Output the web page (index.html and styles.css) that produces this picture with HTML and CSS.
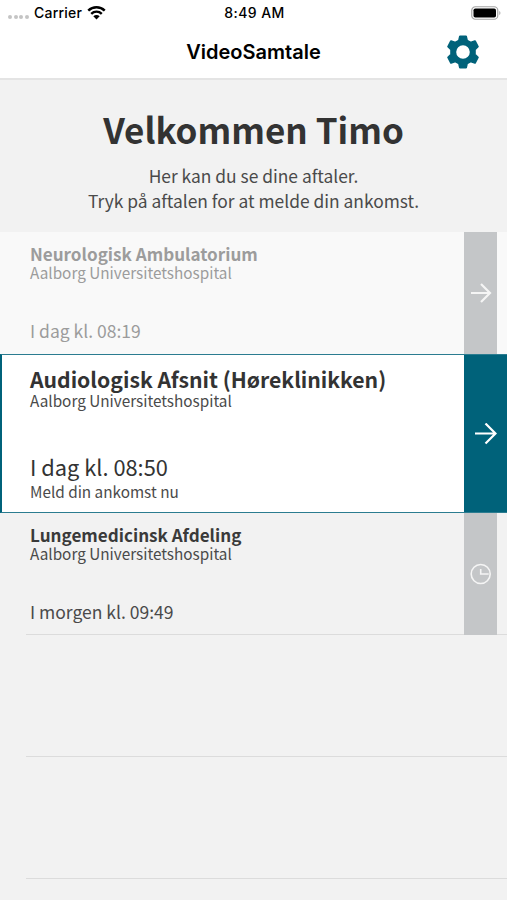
FILE: index.html
```html
<!DOCTYPE html>
<html lang="da">
<head>
    <meta charset="UTF-8">
    <meta name="viewport" content="width=device-width, initial-scale=1.0">
    <title>VideoSamtale</title>
    <link rel="stylesheet" href="styles.css">
</head>
<body>
    <header>
        <div class="status-bar">
            <div class="carrier">
                <span class="signal"><i></i><i></i><i></i><i></i></span>
                <span>Carrier</span>
                <svg class="wifi" viewBox="0 0 18 14">
                    <path d="M1.2 5.2a11.2 11.2 0 0 1 15.6 0M4 8.2a7.2 7.2 0 0 1 10 0" fill="none" stroke="#000" stroke-width="2.3"/>
                    <path d="M9 13.6l-3-3a4.3 4.3 0 0 1 6 0z"/>
                </svg>
            </div>
            <span class="clock">8:49 AM</span>
            <svg class="battery" viewBox="0 0 30 14">
                <rect x="0.75" y="0.75" width="26" height="12.5" rx="3.6" fill="none" stroke="#a5a5a5" stroke-width="1.2"/>
                <rect x="2.5" y="2.5" width="22.5" height="9" rx="1.8"/>
                <path d="M28.3 5v4c1.5-.6 1.5-3.4 0-4z" fill="#a5a5a5"/>
            </svg>
        </div>
        <div class="nav-bar">
            <h2>VideoSamtale</h2>
            <svg class="settings" viewBox="-16 -17 32 34">
                <path fill="#00627a" fill-rule="evenodd" stroke="#00627a" stroke-width="2" stroke-linejoin="round" d="M-3-15.5H3L4-11.3 7.6-9.3 12-10.7 14.8-5.4 11.8-2.6V2.6L14.8 5.4 12 10.7 7.6 9.3 4 11.3 3 15.5H-3L-4 11.3-7.6 9.3-12 10.7-14.8 5.4-11.8 2.6V-2.6L-14.8-5.4-12-10.7-7.6-9.3-4-11.3ZM7.8 0A7.8 7.8 0 1 0-7.8 0A7.8 7.8 0 1 0 7.8 0Z"/>
            </svg>
        </div>
    </header>

    <section class="welcome">
        <h1>Velkommen Timo</h1>
        <p>Her kan du se dine aftaler.<br>Tryk på aftalen for at melde din ankomst.</p>
    </section>

    <main class="appointments">
        <div class="appointment past">
            <div class="info">
                <h3>Neurologisk Ambulatorium</h3>
                <p class="place">Aalborg Universitetshospital</p>
                <p class="time">I dag kl. 08:19</p>
            </div>
            <div class="action">
                <svg viewBox="0 0 22 22"><path d="M1 11h19M11 2l9 9-9 9"/></svg>
            </div>
        </div>
        <div class="appointment active">
            <div class="info">
                <h3>Audiologisk Afsnit (Høreklinikken)</h3>
                <p class="place">Aalborg Universitetshospital</p>
                <p class="time">I dag kl. 08:50</p>
                <p class="hint">Meld din ankomst nu</p>
            </div>
            <div class="action">
                <svg viewBox="0 0 22 22"><path d="M0 10.5h20.5M10.5 .5l10 10-10 10"/></svg>
            </div>
        </div>
        <div class="appointment upcoming">
            <div class="info">
                <h3>Lungemedicinsk Afdeling</h3>
                <p class="place">Aalborg Universitetshospital</p>
                <p class="time">I morgen kl. 09:49</p>
            </div>
            <div class="action">
                <svg class="wait" viewBox="0 0 22 22"><circle cx="10.7" cy="11" r="9.5"/><path d="M10.7 6v5h8"/></svg>
            </div>
        </div>
        <div class="empty"></div>
        <div class="empty"></div>
        <div class="empty"></div>
    </main>
</body>
</html>
```
FILE: styles.css
```css
* {
    box-sizing: border-box;
    margin: 0;
    padding: 0;
}
body {
    display: flex;
    flex-direction: column;
    height: 900px;
    background-color: #f2f2f2;
    color: #4a4a4a;
    font-family: "Noto Sans CJK SC", sans-serif;
    white-space: nowrap;
}
svg {
    display: block;
}
header {
    height: 80px;
    background-color: #fff;
    border-bottom: 2px solid #e4e4e4;
    color: #000;
    font-family: Inter, sans-serif;
}
.status-bar {
    display: grid;
    grid-template-columns: 1fr auto 1fr;
    align-items: center;
    height: 26px;
    padding: 0 6px 1px 8px;
    font-size: 14px;
    font-weight: 500;
}
.carrier {
    display: flex;
    align-items: center;
    gap: 5px;
    letter-spacing: 0.2px;
}
.signal {
    display: flex;
    gap: 1.7px;
    padding-top: 8px;
}
.signal i {
    width: 4px;
    height: 4px;
    border-radius: 50%;
    background-color: #c4c4c4;
}
.wifi {
    width: 19px;
    height: 15px;
}
.clock {
    letter-spacing: 0.4px;
}
.battery {
    width: 30px;
    height: 14px;
    justify-self: end;
}
.nav-bar {
    display: grid;
    grid-template-columns: 1fr auto 1fr;
    align-items: center;
    height: 52px;
    padding-right: 28px;
    padding-left: 28px;
}
.nav-bar h2 {
    grid-column: 2;
    font-size: 20px;
    font-weight: 600;
}
.settings {
    width: 32px;
    height: 34px;
    justify-self: end;
}
.welcome {
    height: 152px;
    padding-top: 25px;
    text-align: center;
}
.welcome h1 {
    color: #333;
    font-size: 35px;
    line-height: 48px;
}
.welcome p {
    margin-top: 10px;
    font-size: 17.4px;
    line-height: 25px;
}
.appointments {
    display: flex;
    flex: 1;
    flex-direction: column;
}
.appointment {
    display: flex;
    height: 122px;
    padding-right: 10px;
}
.info {
    flex: 1;
    padding: 12px 0 0 30px;
}
.info h3 {
    color: #3a3a3a;
    font-size: 17.1px;
    line-height: 20px;
}
.place {
    font-size: 15.3px;
    line-height: 16px;
}
.time {
    margin-top: 39px;
    font-size: 17.5px;
    line-height: 24px;
}
.action {
    display: flex;
    align-items: center;
    justify-content: center;
    width: 33px;
    background-color: #c4c6c8;
}
.action svg {
    width: 22px;
    height: 22px;
    fill: none;
    stroke: #f5f5f5;
    stroke-width: 2.2;
}
.action .wait {
    stroke-width: 1.6;
}
.past {
    background-color: #f9f9f9;
}
.past .info h3,
.past .info p {
    color: #9c9c9c;
}
.active {
    height: 159px;
    padding-right: 0;
    background-color: #fff;
    border: 1px solid #2b7c90;
    border-left: 2px solid #00627a;
    border-right: 0;
}
.active .info {
    padding-top: 11px;
    padding-left: 28px;
}
.active .info h3 {
    color: #333;
    font-size: 21.2px;
    line-height: 26px;
}
.active .time {
    margin-top: 44px;
    color: #333;
    font-size: 21.8px;
    line-height: 30px;
}
.hint {
    font-size: 15.3px;
    line-height: 19px;
}
.active .action {
    width: 43px;
    background-color: #00627a;
}
.active .action svg {
    stroke: #fff;
}
/* the separator of the first empty row sits under the grey strip */
.upcoming {
    height: 121px;
}
.upcoming .action {
    z-index: 1;
    margin-bottom: -1px;
}
.empty {
    height: 122px;
    margin-left: 26px;
    border-top: 1px solid #dcdcdc;
}
.empty:last-child {
    flex: 1;
}
```
